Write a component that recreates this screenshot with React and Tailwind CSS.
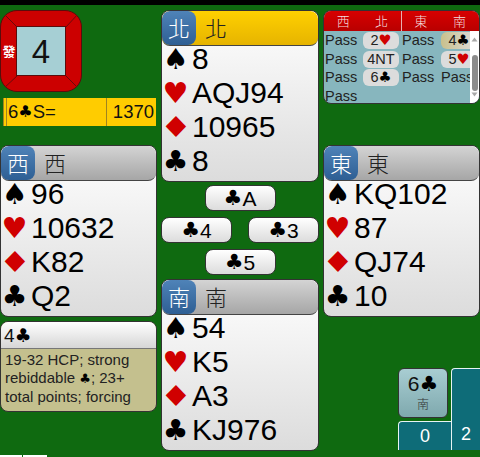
const Suit = ({ s, className = "" }) => (
  <span className={(s === "♥" || s === "♦" ? "text-[#d00000] " : "text-black ") + "font-['DejaVu_Sans',sans-serif] " + className}>{s}</span>
);

const Hand = ({ seat, holdings, active }) => (
  <div className="w-full h-[172px] rounded-lg border border-[#333] overflow-hidden bg-gradient-to-b from-white to-[#dcdcdc] flex flex-col">
    <div className={"relative z-10 h-[35px] shrink-0 flex items-center rounded-lg border-b border-[#444] " + (active ? "bg-gradient-to-b from-[#ffd000] to-[#e6b400]" : "bg-gradient-to-b from-[#d4d4d4] to-[#a6a6a6]")}>
      <div className="w-[34px] h-[34px] pb-[3px] rounded-lg bg-gradient-to-b from-[#4f83b8] to-[#2e5f94] text-white text-[22px] leading-none font-light flex items-center justify-center font-['Noto_Sans_CJK_TC',sans-serif]">{seat}</div>
      <div className="ml-[9px] pb-[3px] text-[22px] leading-none text-[#222] font-light font-['Noto_Sans_CJK_TC',sans-serif]">{seat}</div>
    </div>
    <div className="flex flex-col -mt-[4px]">
      {holdings.map(([s, cards]) => (
        <div key={s} className="h-[34px] flex items-center text-[30px] leading-none">
          <span className="w-[25px] pl-[2px] flex justify-center shrink-0">
            <Suit s={s} className={s === "♦" ? "text-[29px] inline-block scale-x-125" : "text-[29px]"} />
          </span>
          <span className="text-black ml-[5px]">{cards}</span>
        </div>
      ))}
    </div>
  </div>
);

const Played = ({ children, className = "" }) => (
  <div className={"w-[71px] h-[26px] rounded-lg border border-[#333] bg-gradient-to-b from-white to-[#dcdcdc] flex items-center justify-center text-[21px] text-black leading-none " + className}>
    {children}
  </div>
);

const Bid = ({ children, alert }) => (
  <div className={"h-[17px] w-[36px] ml-[1px] rounded-md flex items-center justify-center " + (alert ? "bg-gradient-to-r from-[#c9c08c] to-[#ddd]" : "bg-[#dcdcdc]")}>
    {children}
  </div>
);

const Auction = () => (
  <div className="relative h-[94px] rounded-lg border border-[#333] overflow-hidden bg-[#87b6be]">
    <div className="h-[20px] grid grid-cols-4 bg-gradient-to-b from-[#d80000] to-[#b80000] text-[#f4dcdc] text-[13px] leading-[20px] text-center font-light font-['Noto_Sans_CJK_TC',sans-serif]">
      <span>西</span>
      <span className="border-r border-[#e8b0b0]">北</span>
      <span>東</span>
      <span>南</span>
    </div>
    <div className="grid grid-cols-[37px_40px_38px_39px] auto-rows-[18.7px] items-center text-[14.5px] text-[#222] leading-none pl-[1px]">
      <span>Pass</span><Bid>2<Suit s="♥" /></Bid><span>Pass</span><Bid alert>4<Suit s="♣" /></Bid>
      <span>Pass</span><Bid>4NT</Bid><span>Pass</span><Bid>5<Suit s="♥" /></Bid>
      <span>Pass</span><Bid>6<Suit s="♣" /></Bid><span>Pass</span><span className="ml-[1px]">Pass</span>
      <span>Pass</span>
    </div>
    {/* scrollbar */}
    <div className="absolute right-0 top-[20px] bottom-0 w-[9px] bg-white flex flex-col items-center justify-between py-[3px]">
      <svg width="7" height="5" viewBox="0 0 7 5" className="mt-[3px]"><path d="M3.5 0.5 L6.5 4.5 L0.5 4.5 Z" fill="#a8a8a8" /></svg>
      <div className="absolute top-[24px] left-[2px] w-[6px] h-[36px] rounded-full bg-[#8c8c8c]" />
      <svg width="7" height="5" viewBox="0 0 7 5" className="mb-[3px]"><path d="M0.5 0.5 L6.5 0.5 L3.5 4.5 Z" fill="#a8a8a8" /></svg>
    </div>
  </div>
);

const BoardTile = () => (
  <div className="relative w-[82px] h-[82px] rounded-[17px] bg-[#cc0000] border border-[#5a0c0c] overflow-hidden flex items-center justify-center">
    <svg className="absolute inset-0" width="80" height="80" viewBox="0 0 80 80">
      <path d="M2 2 L17 17 M78 2 L64 17 M2 78 L17 64 M78 78 L64 64" stroke="#6a0a0a" strokeWidth="1" />
    </svg>
    <div className="relative w-[50px] h-[50px] border border-[#5a0c0c] bg-[#a6cfd4] flex items-center justify-center text-[33px] text-[#111] leading-none">4</div>
    <span className="absolute left-[1px] top-[33px] w-[14px] text-center text-white font-bold text-[13px] leading-none font-['Noto_Sans_CJK_TC',sans-serif]">發</span>
  </div>
);

const Contract = () => (
  <div className="ml-[3px] w-[153px] h-[28px] bg-[#ffcc00] border-l border-[#a08420] flex items-center text-[18.5px] text-[#111] leading-none">
    <div className="h-full w-[100px] ml-[2px] pl-[1px] border-l border-[#a08420] flex items-center">6<Suit s="♣" className="text-[16px]" />S=</div>
    <div className="h-full flex-1 border-l border-[#a08420] flex items-center justify-end pr-[2px]">1370</div>
  </div>
);

const Explanation = () => (
  <div className="mt-[4px] w-full h-[91px] rounded-lg border border-[#333] overflow-hidden bg-[#c4c08e]">
    <div className="h-[27px] bg-gradient-to-b from-white to-[#d6d6d6] border-b border-[#777] flex items-center pl-[3px] text-[19px] text-[#111] leading-none">
      4<Suit s="♣" />
    </div>
    <div className="pl-[4px] pt-[2px] text-[15px] leading-[18px] text-[#222]">
      19-32 HCP; strong<br />rebiddable <Suit s="♣" className="text-[13px]" />; 23+<br />total points; forcing
    </div>
  </div>
);

const Score = () => (
  <div className="self-end mt-[51px] w-[82px] h-[82px] flex">
    <div className="w-[53px] flex flex-col justify-between">
      <div className="w-[50px] h-[50px] rounded-md border border-[#333] bg-gradient-to-b from-[#a8cdd2] to-[#7fa9ae] flex flex-col items-center leading-none pt-[4px]">
        <div className="text-[21px] text-[#111]">6<Suit s="♣" /></div>
        <div className="text-[12px] text-[#333] mt-[3px] font-light font-['Noto_Sans_CJK_TC',sans-serif]">南</div>
      </div>
      <div className="h-[29px] bg-[#0e6c78] border-t border-l border-[#e8f4f4] rounded-tl-sm text-white text-[18px] flex items-center justify-center">0</div>
    </div>
    <div className="flex-1 bg-[#0e6c78] border-t border-l border-[#e8f4f4] rounded-tl-sm text-white text-[18px] flex items-end justify-center pb-[2px]">2</div>
  </div>
);

export default function App() {
  return (
    <div className="relative w-[480px] h-[457px] overflow-hidden bg-[#0f6a10] font-['Liberation_Sans',Arial,sans-serif]">
      <div className="h-[5px] bg-black" />
      <div className="flex gap-[4px] pt-[5px]">
        {/* West column */}
        <div className="w-[157px] shrink-0 flex flex-col">
          <BoardTile />
          <div className="mt-[6px]"><Contract /></div>
          <div className="mt-[19px]">
            <Hand seat="西" holdings={[["♠", "96"], ["♥", "10632"], ["♦", "K82"], ["♣", "Q2"]]} />
          </div>
          <Explanation />
        </div>
        {/* North, table, South */}
        <div className="w-[158px] shrink-0 flex flex-col">
          <Hand active seat="北" holdings={[["♠", "8"], ["♥", "AQJ94"], ["♦", "10965"], ["♣", "8"]]} />
          <Played className="mt-[3px] self-center"><Suit s="♣" />A</Played>
          <div className="mt-[6px] flex justify-between">
            <Played><Suit s="♣" />4</Played>
            <Played><Suit s="♣" />3</Played>
          </div>
          <Played className="mt-[6px] self-center"><Suit s="♣" />5</Played>
          <div className="mt-[4px]">
            <Hand seat="南" holdings={[["♠", "54"], ["♥", "K5"], ["♦", "A3"], ["♣", "KJ976"]]} />
          </div>
        </div>
        {/* East column */}
        <div className="flex-1 min-w-0 flex flex-col">
          <Auction />
          <div className="mt-[41px]">
            <Hand seat="東" holdings={[["♠", "KQ102"], ["♥", "87"], ["♦", "QJ74"], ["♣", "10"]]} />
          </div>
          <Score />
        </div>
      </div>
      {/* next cards peeking in at the page bottom */}
      <div className="absolute left-0 bottom-0 flex gap-[1px]">
        <div className="w-[22px] h-[2px] bg-white" />
        <div className="w-[24px] h-[2px] bg-white" />
      </div>
    </div>
  );
}
